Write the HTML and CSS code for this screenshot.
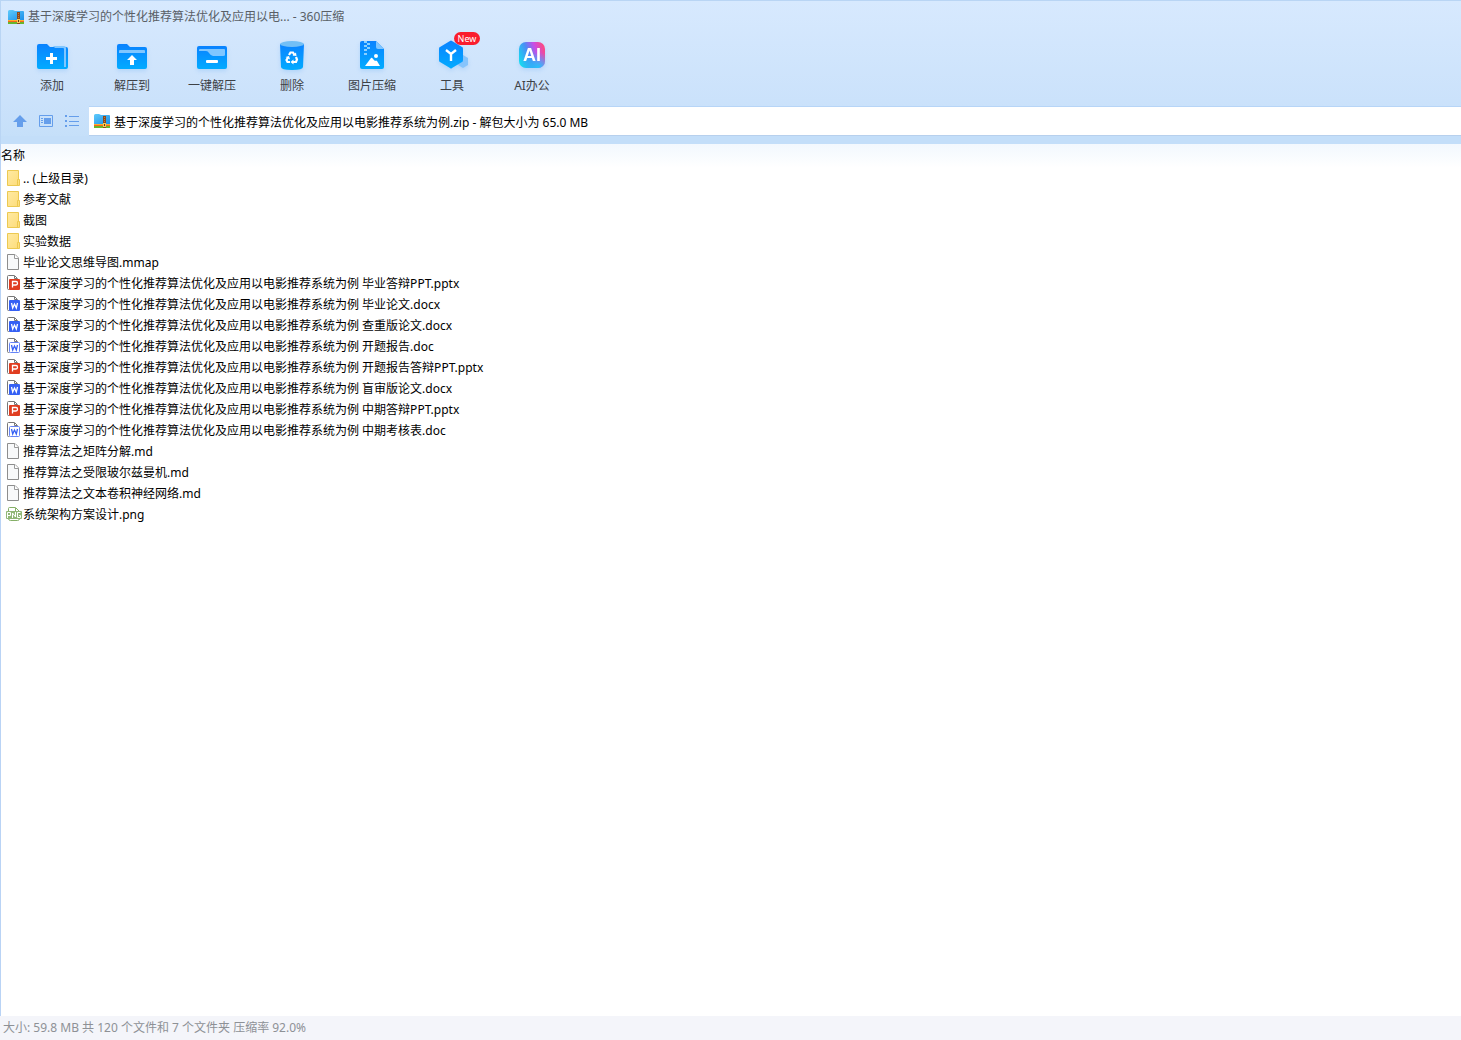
FILE: index.html
```html
<!DOCTYPE html>
<html lang="zh-CN">
<head>
<meta charset="utf-8">
<meta name="viewport" content="width=device-width, initial-scale=1">
<title>360压缩</title>
<link rel="stylesheet" href="styles.css">
</head>
<body>
<svg class="defs" aria-hidden="true">
  <defs>
    <linearGradient id="blue" x1="0" y1="0" x2="0" y2="1"><stop offset="0" stop-color="#0a82ff"/><stop offset="1" stop-color="#02abff"/></linearGradient>
    <linearGradient id="sky" x1="0" y1="0" x2="1" y2="1"><stop offset="0" stop-color="#5fcbfb"/><stop offset="1" stop-color="#1c8fe9"/></linearGradient>
    <linearGradient id="yellow" x1="0" y1="0" x2="1" y2="1"><stop offset="0" stop-color="#ffeaa3"/><stop offset="1" stop-color="#fddc79"/></linearGradient>
    <linearGradient id="ai" x1="0" y1=".7" x2="1" y2=".3"><stop offset="0" stop-color="#17d9f0"/><stop offset=".4" stop-color="#4a8df5"/><stop offset=".7" stop-color="#c94de6"/><stop offset="1" stop-color="#fb4a83"/></linearGradient>
    <radialGradient id="ai-glow" cx=".75" cy="1" r=".6"><stop offset="0" stop-color="#22c6fa"/><stop offset="1" stop-color="#22c6fa" stop-opacity="0"/></radialGradient>
    <symbol id="archive" viewBox="0 0 16 14">
      <path d="M0 1.500Q0 0 1.500 0H5L7 1H15Q16 1 16 2V10H0Z" fill="url(#sky)"/>
      <path d="M0 10H16V11H0Z" fill="#ffae2c"/><path d="M0 11H16V12H0Z" fill="#f4661d"/><path d="M0 12H16V14H0Z" fill="#68b52d"/>
      <path d="M9 2H12V14H9Z" fill="#8a4a20"/><path d="M10 3H11V4H10ZM10 5H11V6H10ZM10 7H11V8H10Z" fill="#c47a38"/>
      <path d="M9 9H12V13H9Z" fill="#f8ca55"/><path d="M10 10H11V12H10Z" fill="#643515"/>
    </symbol>
    <symbol id="folder" viewBox="0 0 16 18">
      <path d="M.5 1.500H11.500V10.500H12.500V16.500H.5Z" fill="url(#yellow)" stroke="#ecc951"/><path d="M10.500 16V10.500H12" fill="none" stroke="#ecc951"/>
    </symbol>
    <symbol id="page" viewBox="0 0 16 18">
      <path d="M.5 1.500H8L11.500 5V16.500H.5Z" fill="#f8f9fa" stroke="#8d8d8d"/><path d="M7.500 1.500V5.500H11.500" fill="#fff" stroke="#9a9a9a"/>
    </symbol>
    <symbol id="office" viewBox="0 0 16 18">
      <path d="M2.500 15.500H1.500Q.5 15.500 .5 14.500V2.500Q.5 1.500 1.500 1.500H7.500L10.500 4.500V7" fill="#fff" stroke="#777"/><path d="M7.500 2V4.500H10" fill="none" stroke="#777"/>
    </symbol>
    <symbol id="ppt" viewBox="0 0 16 18">
      <use href="#office" width="16" height="18"/><rect x="2" y="5" width="11" height="11" rx="1" fill="#e03d20"/><path d="M5.500 13.500V7.500H9Q10.500 7.500 10.500 9.300Q10.500 11 9 11H5.500" fill="none" stroke="#fff" stroke-width="1.300"/>
    </symbol>
    <symbol id="docx" viewBox="0 0 16 18">
      <use href="#office" width="16" height="18"/><rect x="2" y="5" width="11" height="11" rx="1" fill="#3560f4"/><path d="M4.500 8L5.700 13L7.500 9L9.300 13L10.500 8" fill="none" stroke="#fff" stroke-width="1.300"/>
    </symbol>
    <symbol id="doc" viewBox="0 0 16 18">
      <use href="#office" width="16" height="18"/><rect x="2.500" y="5.500" width="10" height="10" rx="1" fill="#fff" stroke="#6684f5"/><path d="M4.500 8L5.700 13L7.500 9L9.300 13L10.500 8" fill="none" stroke="#3560f4" stroke-width="1.300"/>
    </symbol>
    <symbol id="png" viewBox="1 0 16 18">
      <path d="M2.500 6V3.500Q2.500 2.500 3.500 2.500H9.500L13.500 6.500V13.500Q13.500 15.500 11.500 15.500H4.500Q2.500 15.500 2.500 13.500Z" fill="#fff" stroke="#85af67"/><path d="M9.500 3V6.500H13" fill="none" stroke="#85af67"/>
      <rect x="0" y="6" width="16" height="8" rx="1" fill="#91b776"/><path d="M1.500 13V7.500H4.500V10.500H2M6.500 13V8L9.500 12V7M14.500 7.500H11.500V12.500H14.500V10.500H13" fill="none" stroke="#fff"/>
    </symbol>
  </defs>
</svg>
<div class="window">
  <header class="chrome">
    <div class="titlebar"><svg class="archive-icon" aria-hidden="true"><use href="#archive"/></svg><span>基于深度学习的个性化推荐算法优化及应用以电... - 360压缩</span></div>
    <nav class="toolbar" aria-label="工具栏">
      <button class="tool" type="button"><svg class="tool-icon" viewBox="0 0 34 34" aria-hidden="true"><path d="M2 7Q2 5 4 5H12L15 8H31Q33 8 33 10V28Q33 30 31 30H4Q2 30 2 28Z" fill="url(#blue)"/><path d="M18 7H29Q31 7 31 9V28H29V10Q29 9 28 9H20Z" fill="#80c6ff"/><path d="M15 14H18V18H22V21H18V25H15V21H11V18H15Z" fill="#fff"/></svg><span>添加</span></button>
      <button class="tool" type="button"><svg class="tool-icon" viewBox="0 0 34 34" aria-hidden="true"><path d="M2 7Q2 5 4 5H12L15 8H30Q32 8 32 10V28Q32 30 30 30H4Q2 30 2 28Z" fill="url(#blue)"/><path d="M4 14V12Q4 11 5 11H29Q30 11 30 12V14Z" fill="#80c6ff"/><path d="M17 16L22 21H19V26H15V21H12Z" fill="#fff"/></svg><span>解压到</span></button>
      <button class="tool" type="button"><svg class="tool-icon" viewBox="0 0 34 34" aria-hidden="true"><rect x="2" y="7" width="30" height="23" rx="2" fill="url(#blue)"/><path d="M4 12V11Q4 10 5 10H29Q30 10 30 11V16Q30 17 28 17H18Q16 17 14 14Q13 12 11 12Z" fill="#80c6ff"/><rect x="11" y="21" width="12" height="3" rx="1" fill="#fff"/></svg><span>一键解压</span></button>
      <button class="tool" type="button"><svg class="tool-icon" viewBox="0 0 34 34" aria-hidden="true"><path d="M5 5H29L28 28Q28 31 17 31Q6 31 6 28Z" fill="url(#blue)"/><ellipse cx="17" cy="5" rx="12" ry="3" fill="#72bff6"/><path d="M14 16L15.500 13.500H18L19.500 16M21 18L22 20.500L21 23H18M15 23H12.500L11.500 21L13 18.500" fill="none" stroke="#fff" stroke-width="2.200"/><path d="M17.500 16.500L21.500 17L21 13.500ZM18.500 20.500V25.500L15.500 23ZM10.500 18L14 17L15 20.500Z" fill="#fff"/></svg><span>删除</span></button>
      <button class="tool" type="button"><svg class="tool-icon" viewBox="0 0 34 34" aria-hidden="true"><path d="M5 4Q5 2 7 2H21L29 10V28Q29 30 27 30H7Q5 30 5 28Z" fill="url(#blue)"/><path d="M21 2L29 10H23Q21 10 21 8Z" fill="#80c6ff"/><path d="M9 2H12V4H9ZM12 4H15V6H12ZM9 6H12V8H9ZM12 8H15V10H12ZM9 10H12V12H9ZM9 14H12V16H9Z" fill="#8bd0ff"/><circle cx="21" cy="17" r="2" fill="#fff"/><path d="M10 27L16 19Q17 18 18 20L20 22Q21 21 22 22L25 27Z" fill="#fff"/></svg><span>图片压缩</span></button>
      <button class="tool" type="button"><span class="badge">New</span><svg class="tool-icon" viewBox="0 0 34 34" aria-hidden="true"><path d="M25 19L28 16L33 19V26L28 29L23 26Z" fill="#86c4fc"/><path d="M15 2Q16 1 17 2L27 8Q28 8 28 10V21Q28 23 27 23L17 29Q16 30 15 29L5 23Q4 23 4 21V10Q4 8 5 8Z" fill="url(#blue)"/><path d="M11 11L16 15L21 11M16 15V22" fill="none" stroke="#fff" stroke-width="2.400"/></svg><span>工具</span></button>
      <button class="tool" type="button"><svg class="tool-icon" viewBox="0 0 34 34" aria-hidden="true"><rect x="4" y="3" width="26" height="26" rx="7" fill="url(#ai)"/><rect x="4" y="3" width="26" height="26" rx="7" fill="url(#ai-glow)"/><text class="ai-mark" x="17" y="22" text-anchor="middle">AI</text></svg><span>AI办公</span></button>
    </nav>
    <div class="address-row">
      <div class="nav-buttons">
        <button class="nav-button" type="button" aria-label="上一级"><svg viewBox="0 0 16 16" aria-hidden="true"><path d="M8 2L15 9H11V14H5V9H1Z" fill="#659eeb"/></svg></button>
        <button class="nav-button" type="button" aria-label="预览"><svg viewBox="0 0 16 16" aria-hidden="true"><path d="M1.500 2.500H14.500V13.500H1.500Z" fill="none" stroke="#659eeb"/><path d="M6 5H13V11H6ZM3 5H5V6H3ZM3 7H5V8H3ZM3 9H5V10H3Z" fill="#659eeb"/></svg></button>
        <button class="nav-button" type="button" aria-label="列表"><svg viewBox="0 0 16 16" aria-hidden="true"><path d="M1 2H3V4H1ZM5 3H15V4H5ZM1 7H3V9H1ZM5 8H15V9H5ZM1 12H3V14H1ZM5 12H15V13H5Z" fill="#659eeb"/></svg></button>
      </div>
      <label class="address"><svg class="archive-icon" aria-hidden="true"><use href="#archive"/></svg><input class="address-input" type="text" aria-label="压缩包路径" value="基于深度学习的个性化推荐算法优化及应用以电影推荐系统为例.zip - 解包大小为 65.0 MB"></label>
    </div>
  </header>
  <main class="listing">
    <table class="files">
      <thead><tr><th scope="col">名称</th></tr></thead>
      <tbody>
        <tr><td><div class="file"><svg class="file-icon"><use href="#folder"/></svg><span>.. (上级目录)</span></div></td></tr>
        <tr><td><div class="file"><svg class="file-icon"><use href="#folder"/></svg><span>参考文献</span></div></td></tr>
        <tr><td><div class="file"><svg class="file-icon"><use href="#folder"/></svg><span>截图</span></div></td></tr>
        <tr><td><div class="file"><svg class="file-icon"><use href="#folder"/></svg><span>实验数据</span></div></td></tr>
        <tr><td><div class="file"><svg class="file-icon"><use href="#page"/></svg><span>毕业论文思维导图.mmap</span></div></td></tr>
        <tr><td><div class="file"><svg class="file-icon"><use href="#ppt"/></svg><span>基于深度学习的个性化推荐算法优化及应用以电影推荐系统为例 毕业答辩PPT.pptx</span></div></td></tr>
        <tr><td><div class="file"><svg class="file-icon"><use href="#docx"/></svg><span>基于深度学习的个性化推荐算法优化及应用以电影推荐系统为例 毕业论文.docx</span></div></td></tr>
        <tr><td><div class="file"><svg class="file-icon"><use href="#docx"/></svg><span>基于深度学习的个性化推荐算法优化及应用以电影推荐系统为例 查重版论文.docx</span></div></td></tr>
        <tr><td><div class="file"><svg class="file-icon"><use href="#doc"/></svg><span>基于深度学习的个性化推荐算法优化及应用以电影推荐系统为例 开题报告.doc</span></div></td></tr>
        <tr><td><div class="file"><svg class="file-icon"><use href="#ppt"/></svg><span>基于深度学习的个性化推荐算法优化及应用以电影推荐系统为例 开题报告答辩PPT.pptx</span></div></td></tr>
        <tr><td><div class="file"><svg class="file-icon"><use href="#docx"/></svg><span>基于深度学习的个性化推荐算法优化及应用以电影推荐系统为例 盲审版论文.docx</span></div></td></tr>
        <tr><td><div class="file"><svg class="file-icon"><use href="#ppt"/></svg><span>基于深度学习的个性化推荐算法优化及应用以电影推荐系统为例 中期答辩PPT.pptx</span></div></td></tr>
        <tr><td><div class="file"><svg class="file-icon"><use href="#doc"/></svg><span>基于深度学习的个性化推荐算法优化及应用以电影推荐系统为例 中期考核表.doc</span></div></td></tr>
        <tr><td><div class="file"><svg class="file-icon"><use href="#page"/></svg><span>推荐算法之矩阵分解.md</span></div></td></tr>
        <tr><td><div class="file"><svg class="file-icon"><use href="#page"/></svg><span>推荐算法之受限玻尔兹曼机.md</span></div></td></tr>
        <tr><td><div class="file"><svg class="file-icon"><use href="#page"/></svg><span>推荐算法之文本卷积神经网络.md</span></div></td></tr>
        <tr><td><div class="file"><svg class="file-icon"><use href="#png"/></svg><span>系统架构方案设计.png</span></div></td></tr>
      </tbody>
    </table>
  </main>
  <footer class="status">大小: 59.8 MB 共 120 个文件和 7 个文件夹 压缩率 92.0%</footer>
</div>
</body>
</html>
```
FILE: styles.css
```css
* { box-sizing: border-box; }

body {
  margin: 0;
  font: 12px/20px "Noto Sans", "Noto Sans CJK SC", sans-serif;
  color: #000;
  background: #fff;
}

button, input { font: inherit; color: inherit; }

button {
  padding: 0;
  border: 0;
  background: none;
}

svg symbol { overflow: visible; }

.defs { position: absolute; width: 0; height: 0; }

.window {
  display: flex;
  flex-direction: column;
  min-height: 100vh;
}

.chrome {
  border-top: 1px solid #b9d5f4;
  border-left: 1px solid #b9d5f4;
  background: linear-gradient(#d7e9fe, #cbe2fb 70%, #c4dff9);
}

.titlebar {
  display: flex;
  align-items: center;
  gap: 4px;
  height: 32px;
  padding-left: 7px;
  color: #595f66;
}

.archive-icon { flex: none; width: 16px; height: 14px; overflow: visible; }

.toolbar {
  display: flex;
  height: 73px;
  padding: 6px 0 0 11px;
}

.tool {
  position: relative;
  display: flex;
  flex-direction: column;
  align-items: center;
  justify-content: flex-start;
  width: 80px;
  color: #3d4146;
}

.tool-icon {
  width: 34px;
  height: 34px;
  margin-bottom: 3px;
  filter: drop-shadow(0 2px 2px #3c96f033);
}

.ai-mark { font: bold 18px "Liberation Sans", sans-serif; fill: #fff; }

.badge {
  position: absolute;
  top: -7px;
  left: 42px;
  z-index: 1;
  width: 26px;
  border-radius: 7px;
  font-size: 9px;
  line-height: 13px;
  text-align: center;
  color: #fff;
  background: #fa1d2d;
}

.address-row {
  display: flex;
  border-bottom: 8px solid #c3def9;
}

.nav-buttons {
  display: flex;
  align-items: center;
  gap: 10px;
  width: 88px;
  padding-left: 11px;
}

.nav-button, .nav-button svg { display: block; width: 16px; height: 16px; }

.address {
  display: flex;
  flex: 1;
  align-items: center;
  gap: 4px;
  height: 30px;
  padding-left: 5px;
  border-top: 1px solid #b7d5f7;
  border-bottom: 1px solid #b7d0ed;
  background: #fff;
}

.address-input {
  flex: 1;
  min-width: 0;
  height: 22px;
  padding: 2px 0 0;
  border: 0;
  outline: 0;
  background: none;
}

.listing {
  flex: 1;
  border-left: 1px solid #b9d3f5;
  background: linear-gradient(#f2f8fe, #fff 24px);
}

.files { width: 100%; border-collapse: collapse; }

.files th {
  height: 24px;
  padding: 0;
  font-weight: normal;
  text-align: left;
}

.files td { padding: 0; }

.file {
  display: flex;
  align-items: flex-start;
  height: 21px;
  padding-left: 6px;
  line-height: 21px;
}

.file-icon {
  flex: none;
  width: 16px;
  height: 18px;
  margin-top: 1px;
  overflow: visible;
}

.status {
  height: 24px;
  padding: 2px 3px;
  color: #8e9196;
  background: #f4f5fa;
}
```
